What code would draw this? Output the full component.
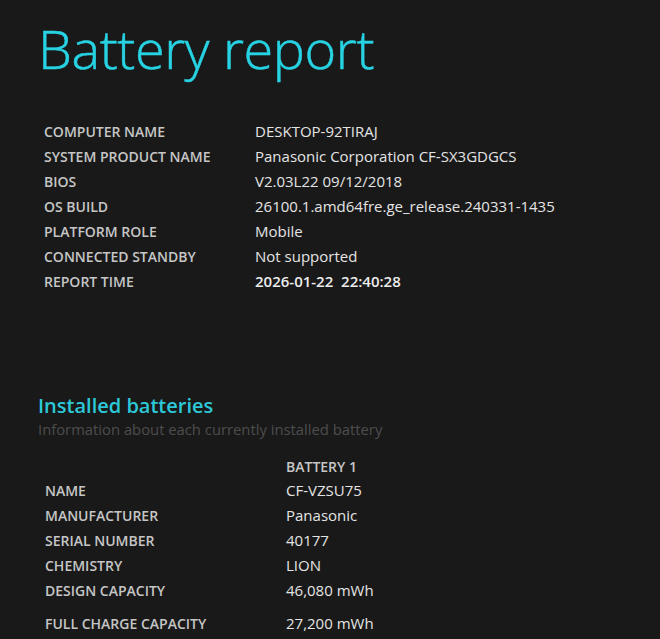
const systemInfo = [
    ["COMPUTER NAME", "DESKTOP-92TIRAJ"],
    ["SYSTEM PRODUCT NAME", "Panasonic Corporation CF-SX3GDGCS"],
    ["BIOS", "V2.03L22 09/12/2018"],
    ["OS BUILD", "26100.1.amd64fre.ge_release.240331-1435"],
    ["PLATFORM ROLE", "Mobile"],
    ["CONNECTED STANDBY", "Not supported"],
];

const batteryInfo = [
    ["NAME", "CF-VZSU75"],
    ["MANUFACTURER", "Panasonic"],
    ["SERIAL NUMBER", "40177"],
    ["CHEMISTRY", "LION"],
    ["DESIGN CAPACITY", "46,080 mWh"],
];

function App() {
    return (
        <div className="min-h-[639px] bg-[#191919] text-[#e6e6e6] font-['Open_Sans',sans-serif] pl-[38px] pt-[14px] overflow-hidden">
            {/* Title */}
            <h1 className="text-[54px] font-light leading-[68px] text-[#27d3e3] tracking-[-0.4px] [-webkit-text-stroke:0.5px_#27d3e3]">
                Battery report
            </h1>

            {/* System info */}
            <table className="mt-[37px] ml-[6px]">
                <tbody>
                    {systemInfo.map(([label, value]) => (
                        <tr key={label} className="h-[25px]">
                            <td className="w-[211px] text-[14px] font-semibold text-[#c6c6c6]">
                                {label}
                            </td>
                            <td className="text-[15px] text-[#e4e4e4]">{value}</td>
                        </tr>
                    ))}
                    <tr className="h-[25px]">
                        <td className="text-[14px] font-semibold text-[#c6c6c6]">REPORT TIME</td>
                        <td className="text-[15px] font-semibold text-[#ececec]">
                            2026-01-22&nbsp;&nbsp;22:40:28
                        </td>
                    </tr>
                </tbody>
            </table>

            {/* Installed batteries */}
            <h2 className="mt-[99px] text-[20px] font-semibold leading-[26px] text-[#2dc8d8]">
                Installed batteries
            </h2>
            <p className="text-[14.8px] leading-[20px] text-[#4d4d4d]">
                Information about each currently installed battery
            </p>

            <table className="mt-[15px] ml-[7px]">
                <thead>
                    <tr className="h-[24px]">
                        <th className="w-[241px]"></th>
                        <th className="text-left text-[14px] font-semibold text-[#c6c6c6]">BATTERY 1</th>
                    </tr>
                </thead>
                <tbody>
                    {batteryInfo.map(([label, value]) => (
                        <tr key={label} className="h-[25px]">
                            <td className="text-[14px] font-semibold text-[#c6c6c6]">{label}</td>
                            <td className="text-[15px] text-[#e4e4e4]">{value}</td>
                        </tr>
                    ))}
                    <tr className="h-[33px]">
                        <td className="text-[14px] font-semibold text-[#c6c6c6] pt-[8px]">FULL CHARGE CAPACITY</td>
                        <td className="text-[15px] text-[#e4e4e4] pt-[8px]">27,200 mWh</td>
                    </tr>
                </tbody>
            </table>
        </div>
    );
}

export default App;
